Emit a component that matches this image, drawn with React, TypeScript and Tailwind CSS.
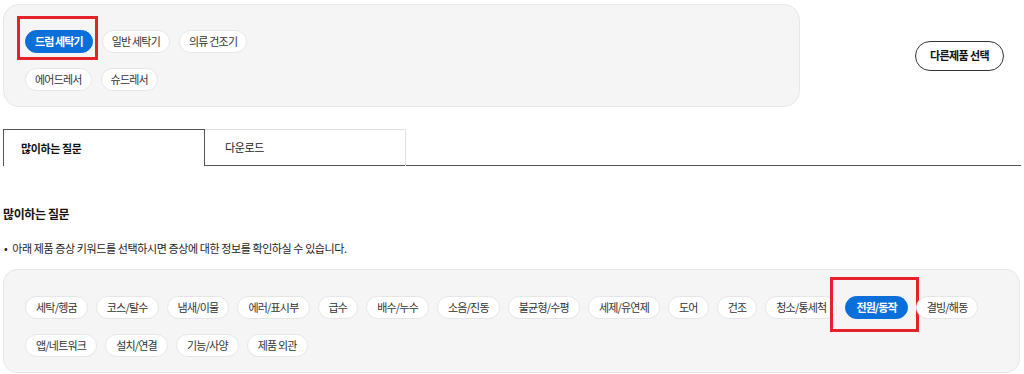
import React from 'react';

const productTypes = ['드럼 세탁기', '일반 세탁기', '의류 건조기', '에어드레서', '슈드레서'];

const keywords = [
  '세탁/헹굼',
  '코스/탈수',
  '냄새/이물',
  '에러/표시부',
  '급수',
  '배수/누수',
  '소음/진동',
  '불균형/수평',
  '세제/유연제',
  '도어',
  '건조',
  '청소/통세척',
  '전원/동작',
  '결빙/해동',
  '앱/네트워크',
  '설치/연결',
  '기능/사양',
  '제품 외관',
];

function Chip({
  label,
  active,
  markClass,
  tight,
}: {
  label: string;
  active?: boolean;
  markClass?: string;
  tight?: boolean;
}) {
  const pad = tight ? 'px-[9px]' : 'px-[10px]';
  return (
    <div className="relative">
      <button
        className={
          active
            ? `h-[23px] ${pad} rounded-full bg-[#0b6fd9] border border-[#0b6fd9] text-white text-[11px] tracking-[-0.9px] font-bold leading-none whitespace-nowrap`
            : `h-[23px] ${pad} rounded-full bg-white border border-[#e6e6e6] text-[#333] text-[11px] tracking-[-0.8px] leading-none whitespace-nowrap`
        }
      >
        {label}
      </button>
      {/* red highlight annotation */}
      {markClass && <div className={`absolute border-[3px] border-[#e3222b] pointer-events-none ${markClass}`} />}
    </div>
  );
}

export default function App() {
  return (
    <div
      className="w-[1024px] h-[374px] bg-white overflow-hidden pl-[3px] pr-[4px] pt-[4px] text-[#111]"
      style={{ fontFamily: '"Noto Sans CJK KR", "Noto Sans", sans-serif' }}
    >
      {/* product selector */}
      <div className="flex items-center">
        <div className="w-[797px] h-[103px] rounded-[16px] bg-[#f5f5f5] border border-[#e8e8e8] pt-[22px] pl-[21px]">
          <div className="flex flex-wrap w-[260px] gap-x-[9px] gap-y-[12px]">
            {productTypes.map((p, i) => (
              <Chip
                key={p}
                label={p}
                tight
                active={i === 0}
                markClass={i === 0 ? 'left-[-8px] right-[-5px] top-[-11px] bottom-[-7px]' : undefined}
              />
            ))}
          </div>
        </div>
        <div className="flex-1 flex justify-end pr-[16px]">
          <button className="h-[30px] px-[14px] rounded-full border-[1.5px] border-[#333] bg-white text-[11px] tracking-[-0.6px] font-bold text-[#111] leading-none">
            다른제품 선택
          </button>
        </div>
      </div>

      {/* tabs */}
      <div className="flex mt-[22px] h-[37px]">
        <div className="w-[202px] border-t border-l border-r border-[#555] pl-[17px] flex items-center text-[11px] tracking-[-0.4px] font-bold">
          많이하는 질문
        </div>
        <div className="w-[201px] border-t border-r border-[#e0e0e0] flex flex-col">
          <div className="flex-1 flex items-center pl-[20px] text-[11px] tracking-[-0.4px] text-[#222]">다운로드</div>
          <div className="h-[1px] bg-[#555] -ml-[1px]" />
        </div>
        <div className="flex-1 flex flex-col justify-end">
          <div className="h-[1px] bg-[#555] mr-[-1px]" />
        </div>
      </div>

      {/* faq */}
      <h2 className="mt-[42px] text-[12px] tracking-[-0.4px] font-bold leading-none text-[#111]">많이하는 질문</h2>
      <p className="mt-[23px] text-[11px] tracking-[-0.4px] leading-none text-[#222] pl-[1px]">
        <span className="mr-[5px]">•</span>아래 제품 증상 키워드를 선택하시면 증상에 대한 정보를 확인하실 수 있습니다.
      </p>

      <div className="mt-[15px] w-[1017px] h-[104px] rounded-[14px] bg-[#f5f5f5] border border-[#e8e8e8] pt-[23px] pl-[21px] pr-[30px]">
        <div className="flex flex-wrap gap-x-[8px] gap-y-[12px]">
          {keywords.map((k) => (
            <Chip
              key={k}
              label={k}
              active={k === '전원/동작'}
              markClass={k === '전원/동작' ? 'left-[-15px] right-[-11px] top-[-16px] bottom-[-13px]' : undefined}
            />
          ))}
        </div>
      </div>
    </div>
  );
}
